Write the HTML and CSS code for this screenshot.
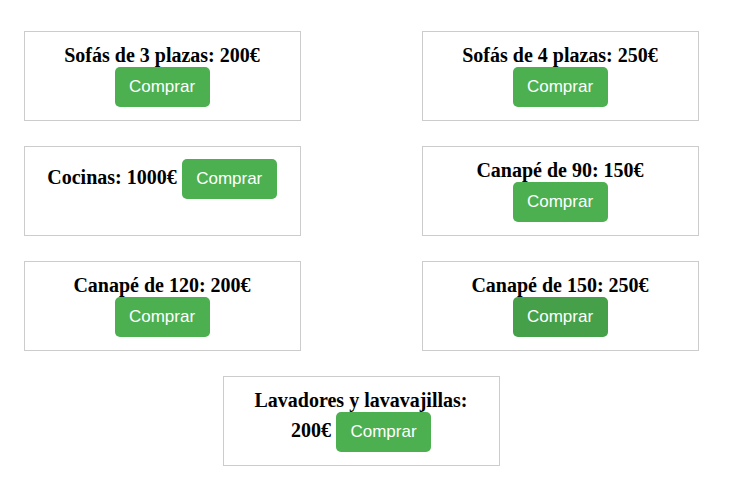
FILE: index.html
```html
<!DOCTYPE html>
<html lang="es">
<head>
<meta charset="utf-8">
<meta name="viewport" content="width=device-width, initial-scale=1">
<title>Productos</title>
<link rel="stylesheet" href="styles.css">
</head>
<body>
<main class="products">
  <article class="product"><strong>Sofás de 3 plazas: 200€</strong> <button type="button" class="buy">Comprar</button></article>
  <article class="product"><strong>Sofás de 4 plazas: 250€</strong> <button type="button" class="buy">Comprar</button></article>
  <article class="product"><strong>Cocinas: 1000€</strong> <button type="button" class="buy">Comprar</button></article>
  <article class="product"><strong>Canapé de 90: 150€</strong> <button type="button" class="buy">Comprar</button></article>
  <article class="product"><strong>Canapé de 120: 200€</strong> <button type="button" class="buy">Comprar</button></article>
  <article class="product"><strong>Canapé de 150: 250€</strong> <button type="button" class="buy buy-active">Comprar</button></article>
  <article class="product"><strong>Lavadores y lavavajillas: 200€</strong> <button type="button" class="buy">Comprar</button></article>
</main>
</body>
</html>
```
FILE: styles.css
```css
* {
  box-sizing: border-box;
}

body {
  margin: 0;
  background: #fff;
  color: #000;
  font-family: "Liberation Serif", "Times New Roman", serif;
}

.products {
  display: flex;
  flex-wrap: wrap;
  justify-content: center;
  gap: 25px 121px;
  padding: 31px 20px 30px 0;
}

.product {
  width: 277px;
  min-height: 90px;
  padding: 12px 20px;
  border: 1px solid #ccc;
  font-size: 20px;
  line-height: 23px;
  text-align: center;
}

.buy {
  width: 95px;
  padding: 10px 14px;
  border: 0;
  border-radius: 5px;
  background: #4caf50;
  color: #fff;
  font-family: "Liberation Sans", Arial, sans-serif;
  font-size: 17px;
  line-height: 20px;
  cursor: pointer;
}

.buy:hover,
.buy-active {
  background: #45a049;
}
```
